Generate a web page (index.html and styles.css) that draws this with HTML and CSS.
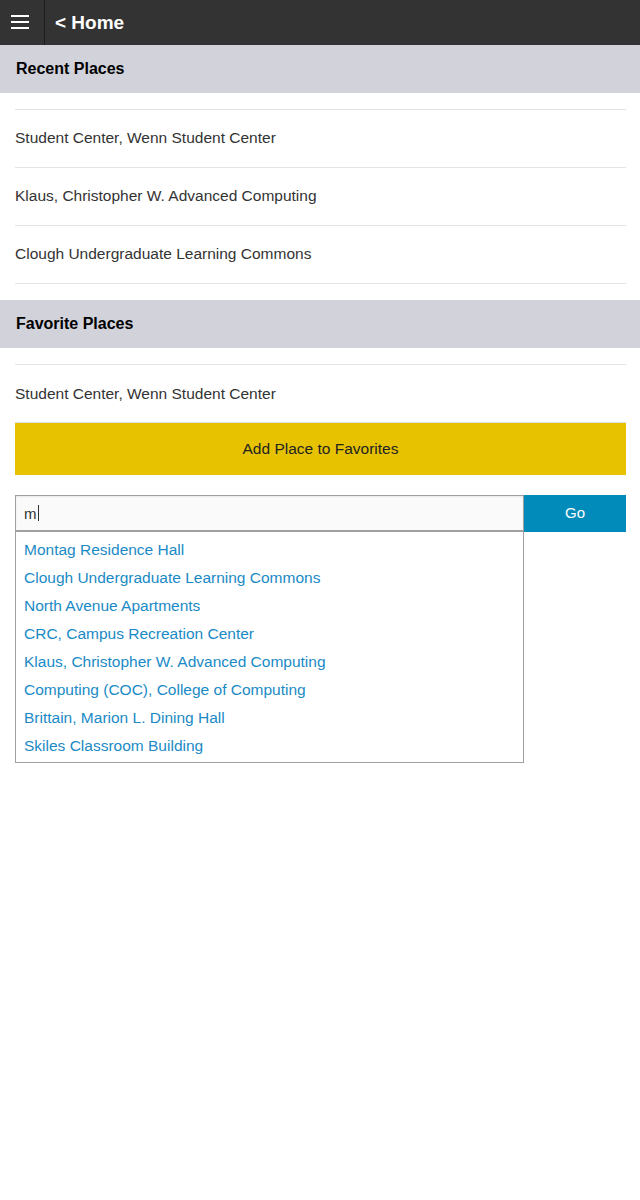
FILE: index.html
```html
<!DOCTYPE html>
<html>
<head>
<meta charset="utf-8">
<link rel="stylesheet" href="styles.css">
</head>
<body>
<header class="topbar">
  <button class="menu-btn" aria-label="Menu">
    <svg width="18" height="16" viewBox="0 0 18 16"><rect x="0" y="1" width="18" height="2" fill="#fff"/><rect x="0" y="7" width="18" height="2" fill="#fff"/><rect x="0" y="13" width="18" height="2" fill="#fff"/></svg>
  </button>
  <div class="title">&lt; Home</div>
</header>

<div class="section-head">Recent Places</div>
<ul class="places">
  <li>Student Center, Wenn Student Center</li>
  <li>Klaus, Christopher W. Advanced Computing</li>
  <li>Clough Undergraduate Learning Commons</li>
</ul>

<div class="section-head">Favorite Places</div>
<ul class="places fav">
  <li>Student Center, Wenn Student Center</li>
</ul>
<div class="add-wrap">
  <button class="add-btn">Add Place to Favorites</button>
</div>

<div class="search">
  <div class="field">
    <div class="input"><span>m</span><span class="caret"></span></div>
    <ul class="suggest">
      <li>Montag Residence Hall</li>
      <li>Clough Undergraduate Learning Commons</li>
      <li>North Avenue Apartments</li>
      <li>CRC, Campus Recreation Center</li>
      <li>Klaus, Christopher W. Advanced Computing</li>
      <li>Computing (COC), College of Computing</li>
      <li>Brittain, Marion L. Dining Hall</li>
      <li>Skiles Classroom Building</li>
    </ul>
  </div>
  <button class="go">Go</button>
</div>
</body>
</html>
```

FILE: styles.css
```css
* { box-sizing: border-box; }
body {
  margin: 0;
  font-family: "Liberation Sans", Arial, sans-serif;
  color: #333;
  background: #fff;
}
.topbar {
  display: flex;
  align-items: stretch;
  height: 45px;
  background: #333;
}
.menu-btn {
  width: 45px;
  border: 0;
  border-right: 1px solid #1c1c1c;
  background: transparent;
  padding: 0 0 1px 0;
  display: flex;
  align-items: center;
  justify-content: center;
  margin: 0;
}
.menu-btn svg { display: block; margin-right: 4px; }
.title {
  color: #fff;
  font-weight: bold;
  font-size: 19px;
  display: flex;
  align-items: center;
  padding-left: 10px;
  padding-top: 1px;
}
.section-head {
  background: #d1d2da;
  height: 48px;
  display: flex;
  align-items: center;
  padding-left: 16px;
  font-weight: bold;
  font-size: 16px;
  color: #000;
}
.places {
  list-style: none;
  margin: 16px 14px 16px 15px;
  padding: 0;
  border-top: 1px solid #e3e3e3;
}
.places li {
  height: 58px;
  border-bottom: 1px solid #e3e3e3;
  display: flex;
  align-items: center;
  font-size: 15.5px;
  color: #333;
  padding-bottom: 1px;
}
.places.fav { margin-bottom: 0; }
.places.fav li { border-bottom: 0; height: 57px; padding-bottom: 0; }
.add-wrap {
  padding: 0 14px 0 15px;
}
.add-btn {
  width: 100%;
  height: 53px;
  background: #e6c200;
  border: 0;
  border-top: 1px solid #e0e0e0;
  font-family: inherit;
  font-size: 15.5px;
  color: #222;
  margin: 0;
  display: block;
}
.search {
  display: flex;
  align-items: flex-start;
  margin: 20px 14px 0 15px;
}
.field {
  width: 509px;
}
.input {
  height: 37px;
  border: 1px solid #a0a0a0;
  border-width: 1px 1px 2px 1px;
  background: #fafafa;
  display: flex;
  align-items: center;
  padding-left: 8px;
  font-size: 15px;
  color: #333;
  box-shadow: inset 0 1px 2px rgba(0,0,0,0.08);
}
.caret {
  display: inline-block;
  width: 1px;
  height: 16px;
  background: #333;
  margin-left: 1px;
}
.suggest {
  list-style: none;
  margin: 0;
  padding: 4px 0 2px 0;
  border: 1px solid #a0a0a0;
  border-top: 0;
}
.suggest li {
  height: 28px;
  display: flex;
  align-items: center;
  padding-left: 8px;
  font-size: 15.5px;
  color: #1a8ac6;
}
.go {
  flex: 1;
  height: 37px;
  background: #008bba;
  border: 0;
  color: #fff;
  font-family: inherit;
  font-size: 15px;
  margin: 0;
  padding-bottom: 4px;
}
```
